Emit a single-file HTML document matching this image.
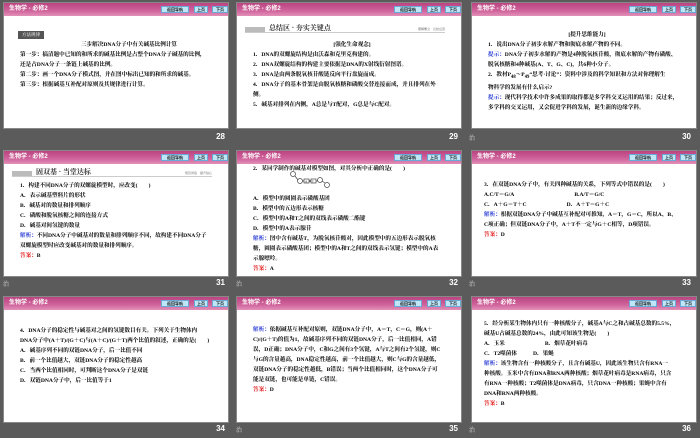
<!DOCTYPE html>
<html><head><meta charset="utf-8">
<style>
*{margin:0;padding:0;box-sizing:border-box}
body{width:700px;height:438px;background:#5b5b5b;position:relative;overflow:hidden;font-family:"Liberation Serif","Noto Serif CJK SC","Noto Sans CJK SC",serif}
.cell{position:absolute;width:233px;height:146px}
.card{position:absolute;left:3px;top:2px;width:226px;height:127px;background:#fff;border:1px solid #888}
.hd{position:absolute;left:0;top:0;width:100%;height:13px;background:linear-gradient(#bb4480,#d0649c 60%,#e290b8);color:#fff;font-size:6px;font-weight:bold;line-height:13px;padding-left:5px;font-family:"Liberation Sans","Noto Sans CJK SC",sans-serif}
.b{position:absolute;top:3px;height:7px;background:#bfe6f7;border:1px solid #6aa8d8;color:#111;font-size:4px;line-height:6px;text-align:center;font-weight:bold}
.b1{left:157px;width:28px}.b2{left:190px;width:14px}.b3{left:208px;width:16px}
.tx{position:absolute;left:16px;top:16px;right:10px;font-size:5.6px;font-weight:bold;line-height:10px;color:#000}
.tx p{white-space:nowrap}
.bl{color:#1a2fd0}.rd{color:#e01010}
.num{position:absolute;right:8px;top:132px;color:#fff;font-size:8px;font-weight:bold;font-family:"Liberation Sans",sans-serif}
.zh{position:absolute;left:3px;top:133px;color:#ddd;font-size:6px}
.sec{position:absolute;left:8px;top:22px;width:200px;height:8px;border-bottom:1px solid #ccc}
.sec i{position:absolute;left:0;top:2px;width:20px;height:5px;background:#bbb}
.sec span{position:absolute;left:24px;top:-2px;font-size:7px;font-weight:bold;color:#333}
.sec em{position:absolute;right:0;top:2px;font-size:3px;font-style:normal;color:#555}
</style></head><body>

<div class="cell" style="left:0;top:0"><div class="card"><div class="hd">生物学 - 必修2<span class="b b1">返回导航</span><span class="b b2">上页</span><span class="b b3">下页</span></div>
<div style="position:absolute;left:14px;top:28px;width:26px;height:8px;background:#555;color:#fff;font-size:4.5px;line-height:8px;text-align:center">方法规律</div>
<div class="tx" style="top:37px;left:16px"><p style="text-align:center;padding-left:20px">三步解决DNA分子中有关碱基比例计算</p><p>第一步：搞清题中已知的和所求的碱基比例是占整个DNA分子碱基的比例，</p><p>还是占DNA分子一条链上碱基的比例。</p><p>第二步：画一个DNA分子模式图，并在图中标出已知的和所求的碱基。</p><p>第三步：根据碱基互补配对原则及其规律进行计算。</p></div></div><div class="num">28</div></div>

<div class="cell" style="left:233px;top:0"><div class="card"><div class="hd">生物学 - 必修2<span class="b b1">返回导航</span><span class="b b2">上页</span><span class="b b3">下页</span></div>
<div class="sec"><i></i><span>总结区 · 夯实关键点</span><em>理解概念　总结反思</em></div>
<div class="tx" style="top:37px"><p style="text-align:center">[强化生命观念]</p><p>1．DNA的双螺旋结构是由沃森和克里克构建的。</p><p>2．DNA双螺旋结构的构建主要依据是DNA的X射线衍射图谱。</p><p>3．DNA是由两条脱氧核苷酸链反向平行盘旋而成。</p><p>4．DNA分子的基本骨架是由脱氧核糖和磷酸交替连接而成，并且排列在外</p><p>侧。</p><p>5．碱基对排列在内侧，A总是与T配对，G总是与C配对。</p></div></div><div class="num">29</div></div>

<div class="cell" style="left:466px;top:0"><div class="card" style="left:5px"><div class="hd">生物学 - 必修2<span class="b b1">返回导航</span><span class="b b2">上页</span><span class="b b3">下页</span></div>
<div class="tx" style="top:27px"><p style="text-align:center">[提升思维能力]</p><p>1．说出DNA分子初步水解产物和彻底水解产物的不同。</p><p><span class="bl">提示：</span>DNA分子初步水解的产物是4种脱氧核苷酸，彻底水解的产物有磷酸、</p><p>脱氧核糖和4种碱基(A、T、G、C)，共6种小分子。</p><p>2．教材P<sub>48</sub>～P<sub>49</sub>“思考·讨论”：资料中涉及的科学知识和方法对你理解生</p><p>物科学的发展有什么启示?</p><p><span class="bl">提示：</span>现代科学技术中许多成果的取得都是多学科交叉运用的结果；反过来，</p><p>多学科的交叉运用，又会促进学科的发展，诞生新的边缘学科。</p></div></div><div class="zh">治</div><div class="num">30</div></div>

<div class="cell" style="left:0;top:146px"><div class="card" style="top:4px"><div class="hd">生物学 - 必修2<span class="b b1">返回导航</span><span class="b b2">上页</span><span class="b b3">下页</span></div>
<div class="sec" style="top:18px"><i></i><span>固双基 · 当堂达标</span><em>规范训练　提升信心</em></div>
<div class="tx" style="top:30px"><p>1．构建不同DNA分子的双螺旋模型时，应改变(　　)</p><p>A．表示碱基塑料片的形状</p><p>B．碱基对的数量和排列顺序</p><p>C．磷酸和脱氧核糖之间的连接方式</p><p>D．碱基对间氢键的数量</p><p><span class="bl">解析：</span>不同DNA分子中碱基对的数量和排列顺序不同，故构建不同DNA分子</p><p>双螺旋模型时应改变碱基对的数量和排列顺序。</p><p><span class="rd">答案：</span>B</p></div></div><div class="zh">治</div><div class="num">31</div></div>

<div class="cell" style="left:233px;top:146px"><div class="card" style="top:4px"><div class="hd">生物学 - 必修2<span class="b b1">返回导航</span><span class="b b2">上页</span><span class="b b3">下页</span></div>
<svg style="position:absolute;left:50px;top:20px" width="60" height="24" viewBox="0 0 60 24" fill="none" stroke="#444" stroke-width="0.7"><circle cx="6" cy="3" r="2.5"/><line x1="8" y1="5" x2="11" y2="9"/><circle cx="13" cy="10" r="2.5"/><line x1="15.5" y1="10" x2="17" y2="10"/><rect x="17" y="8" width="5" height="4"/><text x="18" y="11.3" font-size="3" fill="#000" stroke="none">A</text><line x1="22" y1="9.5" x2="24" y2="9.5"/><line x1="22" y1="10.5" x2="24" y2="10.5"/><rect x="24" y="8" width="5" height="4"/><text x="25" y="11.3" font-size="3" fill="#000" stroke="none">T</text><line x1="29" y1="10" x2="31" y2="10"/><circle cx="33" cy="9" r="2.5"/><line x1="35" y1="10" x2="38" y2="12"/><circle cx="40" cy="14" r="2.5"/></svg>
<div class="tx" style="top:13px"><p>2．某同学制作的碱基对模型如图，对其分析中正确的是(　　)</p><p>&nbsp;</p><p>&nbsp;</p><p>A．模型中的圆圈表示磷酸基团</p><p>B．模型中的五边形表示核糖</p><p>C．模型中的A和T之间的双线表示磷酸二酯键</p><p>D．模型中的A表示腺苷</p><p><span class="bl">解析：</span>图中含有碱基T，为脱氧核苷酸对，因此模型中的五边形表示脱氧核</p><p>糖，圆圈表示磷酸基团；模型中的A和T之间的双线表示氢键；模型中的A表</p><p>示腺嘌呤。</p><p><span class="rd">答案：</span>A</p></div></div><div class="zh">治</div><div class="num">32</div></div>

<div class="cell" style="left:466px;top:146px"><div class="card" style="left:5px;top:4px"><div class="hd">生物学 - 必修2<span class="b b1">返回导航</span><span class="b b2">上页</span><span class="b b3">下页</span></div>
<div class="tx" style="top:29px;left:12px"><p>3．在双链DNA分子中，有关四种碱基的关系，下列等式中错误的是(　　)</p><p>A.C/T＝G/A<span style="display:inline-block;width:60px"></span>B.A/T＝G/C</p><p>C．A＋G＝T＋C<span style="display:inline-block;width:40px"></span>D．A＋T＝G＋C</p><p><span class="bl">解析：</span>根据双链DNA分子中碱基互补配对可推知，A＝T，G＝C，所以A、B、</p><p>C项正确；但双链DNA分子中，A＋T不一定与G＋C相等，D项错误。</p><p><span class="rd">答案：</span>D</p></div></div><div class="zh">治</div><div class="num">33</div></div>

<div class="cell" style="left:0;top:292px"><div class="card" style="top:4px"><div class="hd">生物学 - 必修2<span class="b b1">返回导航</span><span class="b b2">上页</span><span class="b b3">下页</span></div>
<div class="tx" style="top:29px"><p>4．DNA分子的稳定性与碱基对之间的氢键数目有关。下列关于生物体内</p><p>DNA分子中(A＋T)/(G＋C)与(A＋C)/(G＋T)两个比值的叙述，正确的是(　　)</p><p>A．碱基序列不同的双链DNA分子，后一比值不同</p><p>B．前一个比值越大，双链DNA分子的稳定性越高</p><p>C．当两个比值相同时，可判断这个DNA分子是双链</p><p>D．双链DNA分子中，后一比值等于1</p></div></div><div class="num">34</div></div>

<div class="cell" style="left:233px;top:292px"><div class="card" style="top:4px"><div class="hd">生物学 - 必修2<span class="b b1">返回导航</span><span class="b b2">上页</span><span class="b b3">下页</span></div>
<div class="tx" style="top:28px"><p><span class="bl">解析：</span>依据碱基互补配对原则，双链DNA分子中，A＝T，C＝G，则(A＋</p><p>C)/(G＋T)的值为1，故碱基序列不同的双链DNA分子，后一比值相同，A错</p><p>误，D正确；DNA分子中，C和G之间有3个氢键，A与T之间有2个氢键，则C</p><p>与G的含量越高，DNA稳定性越高，前一个比值越大，则C与G的含量越低，</p><p>双链DNA分子的稳定性越低，B错误；当两个比值相同时，这个DNA分子可</p><p>能是双链，也可能是单链，C错误。</p><p><span class="rd">答案：</span>D</p></div></div><div class="zh">治</div><div class="num">35</div></div>

<div class="cell" style="left:466px;top:292px"><div class="card" style="left:5px;top:4px"><div class="hd">生物学 - 必修2<span class="b b1">返回导航</span><span class="b b2">上页</span><span class="b b3">下页</span></div>
<div class="tx" style="top:22px;left:12px"><p>5．经分析某生物体内只有一种核酸分子，碱基A与C之和占碱基总数的5.5%，</p><p>碱基U占碱基总数的24%，由此可知该生物是(　　)</p><p>A．玉米<span style="display:inline-block;width:40px"></span>B．烟草花叶病毒</p><p>C．T2噬菌体<span style="display:inline-block;width:16px"></span>D．果蝇</p><p><span class="bl">解析：</span>该生物含有一种核酸分子，且含有碱基U，因此该生物只含有RNA一</p><p>种核酸。玉米中含有DNA和RNA两种核酸；烟草花叶病毒是RNA病毒，只含</p><p>有RNA一种核酸；T2噬菌体是DNA病毒，只含DNA一种核酸；果蝇中含有</p><p>DNA和RNA两种核酸。</p><p><span class="rd">答案：</span>B</p></div></div><div class="zh">治</div><div class="num">36</div></div>

</body></html>
